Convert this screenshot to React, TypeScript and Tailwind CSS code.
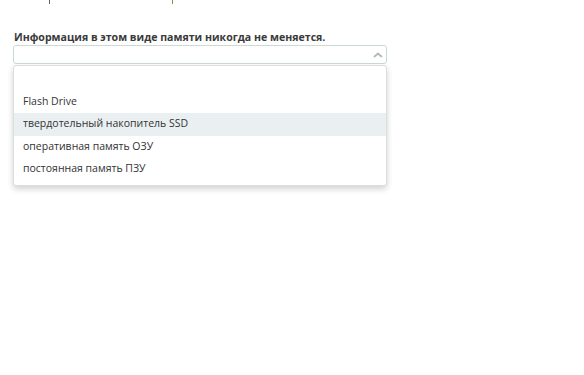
import React from "react";

export default function App() {
  const options = ["", "Flash Drive", "твердотельный накопитель SSD", "оперативная память ОЗУ", "постоянная память ПЗУ"];
  return (
    <div className="w-[584px] h-[375px] bg-white relative overflow-hidden" style={{ fontFamily: '"Open Sans", "Noto Sans", sans-serif' }}>
      <div className="flex h-[4px]">
        <div className="ml-[49px] w-[1px] h-[4px] bg-[#666]" />
        <div className="ml-[122px] w-[1px] h-[4px] bg-[#8a8a50]" />
      </div>
      <div className="pl-[13px] pt-[25px] w-[387px]">
        <div className="pl-[1px] text-[10.6px] font-bold text-[#3a3a3a] leading-[16px]">
          Информация в этом виде памяти никогда не меняется.
        </div>
        <div className="h-[19px] border border-[#cdd9d5] rounded-[3px] flex items-center justify-end pr-[2px]">
          <svg width="12" height="8" viewBox="0 0 12 8">
            <path d="M2 6 L6 2.5 L10 6" fill="none" stroke="#b3bcb9" strokeWidth="2" />
          </svg>
        </div>
        <div className="mt-[1px] h-[121px] bg-white border border-[#d8dfdd] rounded-[3px] shadow-[0_3px_6px_rgba(0,0,0,0.18)] pt-[2px]">
          {options.map((o, i) => (
            <div
              key={i}
              className={`h-[22.5px] flex items-center pl-[9px] text-[10.5px] text-[#333] ${i === 2 ? "bg-[#eaf0f2]" : ""}`}
            >
              {o}
            </div>
          ))}
        </div>
      </div>
    </div>
  );
}
